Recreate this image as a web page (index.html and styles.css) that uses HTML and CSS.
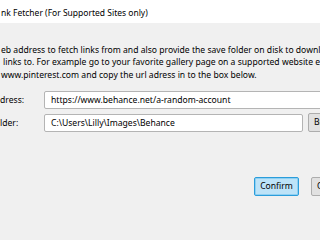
FILE: index.html
```html
<!DOCTYPE html>
<html lang="en">
<head>
<meta charset="utf-8">
<title>Link Fetcher</title>
<link rel="stylesheet" href="styles.css">
</head>
<body>
<div class="dialog">
  <div class="titlebar">nk Fetcher (For Supported Sites only)</div>
  <div class="desc">
    <p>eb address to fetch links from and also provide the save folder on disk to download the</p>
    <p class="indent">links to. For example go to your favorite gallery page on a supported website e.g.</p>
    <p>www.pinterest.com and copy the url adress in to the box below.</p>
  </div>
  <div class="form">
    <label class="label">dress:</label>
    <div class="field wide">https://www.behance.net/a-random-account</div>
    <label class="label">lder:</label>
    <div class="field">C:\Users\Lilly\Images\Behance</div>
    <button class="btn browse">Browse...</button>
  </div>
  <div class="actions">
    <button class="btn primary">Confirm</button>
    <button class="btn cancel">Cancel</button>
  </div>
</div>
</body>
</html>
```
FILE: styles.css
```css
html, body {
  margin: 0;
  padding: 0;
}
body {
  width: 320px;
  height: 214px;
  overflow: hidden;
  background: #f0f0f0;
  font-family: "Noto Sans", "Open Sans", sans-serif;
  font-size: 8.6px;
  color: #000;
}
.dialog {
  width: 380px;
}
.titlebar {
  height: 23px;
  line-height: 25px;
  background: #fff;
  padding-left: 1px;
  white-space: nowrap;
  font-size: 8.5px;
}
.desc {
  margin-top: 20.75px;
  line-height: 12.5px;
  white-space: nowrap;
}
.desc p {
  margin: 0;
  padding-left: 1px;
}
.desc p.indent {
  padding-left: 3px;
}
.form {
  display: grid;
  grid-template-columns: 44px 259px 5px 40px;
  row-gap: 4px;
  margin-top: 9.75px;
  align-items: center;
}
.label {
  grid-column: 1;
  white-space: nowrap;
}
.field {
  grid-column: 2;
  box-sizing: border-box;
  height: 18px;
  line-height: 16px;
  padding-left: 6px;
  background: #fff;
  border: 1px solid #b4b4b4;
  border-radius: 2px;
  white-space: nowrap;
  overflow: hidden;
}
.field.wide {
  grid-column: 2 / 5;
}
.btn {
  font: inherit;
  color: #000;
  box-sizing: border-box;
  height: 19px;
  line-height: 17px;
  margin: 0;
  padding: 0 6px;
  background: #e1e1e1;
  border: 1px solid #adadad;
  border-radius: 2px;
  white-space: nowrap;
  text-align: left;
}
.browse {
  grid-column: 4;
  height: 19px;
  padding-left: 5px;
}
.actions {
  display: flex;
  gap: 12px;
  margin-top: 45px;
  padding-left: 254px;
}
.primary {
  width: 45px;
  text-align: center;
  padding: 0;
  background: #bde3f8;
  border-color: #2b9ddb;
  box-shadow: inset 0 0 0 1px #8fd0f2;
}
.cancel {
  width: 45px;
  padding-left: 5px;
}
```
